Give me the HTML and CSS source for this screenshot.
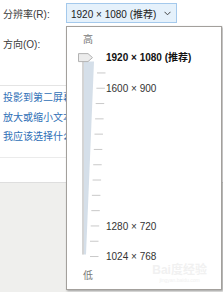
FILE: index.html
```html
<!DOCTYPE html>
<html lang="zh-CN">
<head>
<meta charset="utf-8">
<link rel="stylesheet" href="styles.css">
</head>
<body>
<div class="page">
  <div class="form">
    <div class="row">
      <span class="label">分辨率(R):</span>
      <div class="select">
        <span class="select-text">1920 × 1080 (推荐)</span>
        <svg class="chev" width="7" height="5" viewBox="0 0 7 5"><path d="M0.5 0.8 L3.5 3.8 L6.5 0.8" fill="none" stroke="#444" stroke-width="1"/></svg>
      </div>
    </div>
    <div class="row row2">
      <span class="label">方向(O):</span>
    </div>
    <div class="sep sep1"></div>
    <div class="links">
      <a class="link">投影到第二屏幕</a>
      <a class="link">放大或缩小文本和其他项</a>
      <a class="link">我应该选择什么显示器设置?</a>
    </div>
    <div class="sep sep2"></div>
  </div>
  <div class="band"></div>
</div>

<div class="popup">
  <div class="end-label">高</div>
  <div class="slider">
    <svg class="track" width="29" height="214.2" viewBox="0 0 29 214.2">
      <polygon points="7,11.6 17,11.6 9,204.6 7,204.6" fill="#d5dfe9"/>
      <line x1="6" y1="11" x2="6" y2="204.6" stroke="#a9a9a9" stroke-width="1"/>
      <g stroke="#c9c9c9" stroke-width="1">
        <line x1="20.0" y1="22.95" x2="28.5" y2="22.95"/>
        <line x1="19.4" y1="38.25" x2="27.9" y2="38.25"/>
        <line x1="18.7" y1="53.55" x2="27.2" y2="53.55"/>
        <line x1="18.1" y1="68.85" x2="26.6" y2="68.85"/>
        <line x1="17.5" y1="84.15" x2="26.0" y2="84.15"/>
        <line x1="16.8" y1="99.45" x2="25.3" y2="99.45"/>
        <line x1="16.2" y1="114.75" x2="24.7" y2="114.75"/>
        <line x1="15.6" y1="130.05" x2="24.1" y2="130.05"/>
        <line x1="14.9" y1="145.35" x2="23.4" y2="145.35"/>
        <line x1="14.3" y1="160.65" x2="22.8" y2="160.65"/>
        <line x1="13.7" y1="175.95" x2="22.2" y2="175.95"/>
        <line x1="13.0" y1="191.25" x2="21.5" y2="191.25"/>
        <line x1="13.0" y1="206.55" x2="21.5" y2="206.55"/>
      </g>
      <polygon points="1.5,3.6 11,3.6 15.5,7.6 11,11.6 1.5,11.6" fill="#ececec" stroke="#b3b3b3" stroke-width="1"/>
    </svg>
    <div class="stops">
      <div class="stop current">1920 × 1080 (推荐)</div>
      <div class="stop"></div>
      <div class="stop">1600 × 900</div>
      <div class="stop"></div>
      <div class="stop"></div>
      <div class="stop"></div>
      <div class="stop"></div>
      <div class="stop"></div>
      <div class="stop"></div>
      <div class="stop"></div>
      <div class="stop"></div>
      <div class="stop">1280 × 720</div>
      <div class="stop"></div>
      <div class="stop">1024 × 768</div>
    </div>
  </div>
  <div class="end-label low">低</div>
  <div class="watermark">Bai<span>度</span>经验<small>jingyan.baidu.com</small></div>
</div>
</body>
</html>
```

FILE: styles.css
```css
html, body {
  margin: 0;
  padding: 0;
  height: 100%;
}
body {
  font-family: "Liberation Sans", "Noto Sans CJK SC", sans-serif;
  font-size: 10px;
  color: #333;
  background: #fff;
  overflow: hidden;
  position: relative;
}
.page {
  display: flex;
  flex-direction: column;
  height: 292px;
}
.form {
  padding-top: 3px;
  height: 179px;
}
.row {
  display: flex;
  align-items: center;
  height: 20px;
  padding-left: 3px;
}
.row2 {
  margin-top: 10px;
}
.label {
  width: 63px;
  white-space: nowrap;
  color: #3a3a3a;
}
.select {
  box-sizing: border-box;
  width: 111px;
  height: 20px;
  background: #e5f1fb;
  border: 1px solid #a4c9ec;
  display: flex;
  align-items: center;
  padding-left: 4px;
  padding-right: 5px;
}
.select-text {
  flex: 1;
  color: #222;
  white-space: nowrap;
}
.chev {
  display: block;
}
.sep {
  height: 1px;
  background: #e4e4e4;
  width: 70px;
}
.sep1 {
  margin-top: 32px;
}
.links {
  padding: 2px 0 0 3px;
  display: flex;
  flex-direction: column;
  align-items: flex-start;
}
.link {
  line-height: 19.5px;
  height: 19.5px;
  color: #2f6fb6;
  white-space: nowrap;
}
.sep2 {
  margin-top: 10px;
  background: #ebebeb;
}
.band {
  flex: 1;
  background: #efefed;
  border-top: 1px solid #dedede;
}

/* dropdown overlay */
.popup {
  position: absolute;
  left: 66px;
  top: 26px;
  box-sizing: border-box;
  width: 156px;
  height: 264px;
  background: #fff;
  border: 1px solid #a3a09c;
  box-shadow: 1px 1px 2px rgba(0,0,0,0.35);
  padding: 6px 0 0 10px;
}
.end-label {
  height: 14px;
  line-height: 14px;
  color: #777;
  padding-left: 6px;
}
.slider {
  display: flex;
  margin-top: 3.35px;
}
.track {
  display: block;
  flex: none;
}
.stops {
  display: flex;
  flex-direction: column;
}
.stop {
  height: 15.3px;
  line-height: 15.3px;
  color: #333;
  white-space: nowrap;
}
.stop.current {
  font-weight: bold;
  color: #111;
}
.low {
  margin-top: 4.35px;
}
.watermark {
  position: absolute;
  right: 14px;
  bottom: 6px;
  color: #f1f1f1;
  font-size: 12px;
  font-weight: bold;
  line-height: 13px;
  text-align: center;
}
.watermark small {
  display: block;
  font-size: 5px;
  line-height: 6px;
  font-weight: normal;
}
```
